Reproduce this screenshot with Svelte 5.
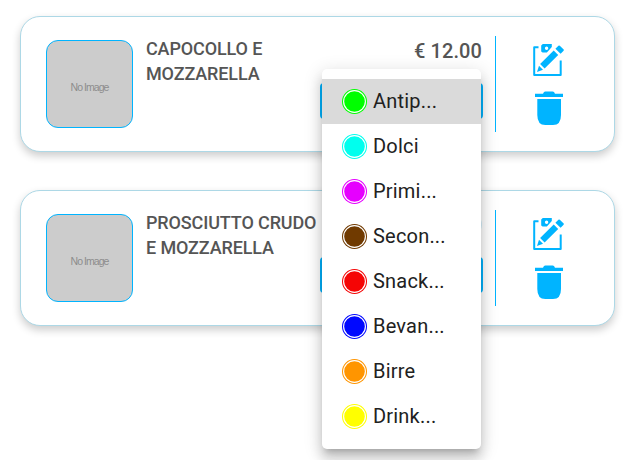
<script>
  const products = [
    { name: 'CAPOCOLLO E MOZZARELLA', price: '€ 12.00' },
    { name: 'PROSCIUTTO CRUDO E MOZZARELLA', price: '€ 12.00' }
  ];
  const categories = [
    { label: 'Antip...', color: '#00ff00' },
    { label: 'Dolci', color: '#00ffee' },
    { label: 'Primi...', color: '#e600ff' },
    { label: 'Secon...', color: '#703a00' },
    { label: 'Snack...', color: '#f50505' },
    { label: 'Bevan...', color: '#0008ff' },
    { label: 'Birre', color: '#ff9500' },
    { label: 'Drink...', color: '#ffff00' }
  ];
  let selected = $state(0);
</script>

<main>
  {#each products as product}
    <article class="card">
      <div class="thumb"><span>No Image</span></div>
      <h2>{product.name}</h2>
      <div class="side">
        <div class="price">{product.price}</div>
        <button class="category" aria-label="Category"></button>
      </div>
      <div class="actions">
        <svg class="edit" width="34" height="34" viewBox="0 0 34 34" aria-label="Edit">
          <path d="M6.5 3.2H2.2V30.9H28.7V16.5" fill="none" stroke="currentColor" stroke-width="2" stroke-linejoin="round" />
          <path d="M9.2 1.6 10.8 0H19.8V2.9L14.9 8.6H10.6L9.2 7.4Z M14.6 2.6A1.7 1.7 0 1 0 14.6 6A1.7 1.7 0 1 0 14.6 2.6Z" fill="currentColor" fill-rule="evenodd" />
          <path d="M21.7 6.4 26.2 10.9 12.6 24.6 8.1 20.1Z M23.4 4.7 26.4 1.7Q27.1 1.2 27.8 1.8L31.7 5.6Q32.1 6.2 31.6 6.8L28.6 9.8Z M7 21.7 11 25.7 5 28Z" fill="currentColor" />
        </svg>
        <svg class="trash" width="28" height="34" viewBox="0 0 28 34" aria-label="Delete">
          <path d="M0 2.7H8Q8.8.4 10.3.4H17.7Q19.2.4 20 2.7H28V6H0Z M2.3 8H26V24Q26 34 18 34H10.3Q2.3 34 2.3 24Z" fill="currentColor" />
        </svg>
      </div>
    </article>
  {/each}

  <ul class="menu">
    {#each categories as category, i}
      <li>
        <button class:selected={selected === i} onclick={() => (selected = i)}>
          <svg width="25" height="25" viewBox="0 0 25 25" style:color={category.color}>
            <circle cx="12.5" cy="12.5" r="12.5" fill="currentColor" />
            <circle cx="12.5" cy="12.5" r="10.9" fill="none" stroke="#fff" stroke-width="1.15" />
          </svg>
          <span>{category.label}</span>
        </button>
      </li>
    {/each}
  </ul>
</main>

<style>
  :global(body) {
    margin: 0;
    background: #fff;
  }
  main {
    position: relative;
    box-sizing: border-box;
    width: 630px;
    height: 460px;
    padding: 16px 15px 0 20px;
    display: flex;
    flex-direction: column;
    gap: 38px;
    overflow: hidden;
    font-family: Roboto, 'Liberation Sans', sans-serif;
  }
  .card {
    box-sizing: border-box;
    height: 136px;
    flex: none;
    display: flex;
    align-items: flex-start;
    padding: 19px 0 0 25px;
    border: 1px solid lightblue;
    border-radius: 20px;
    background: #fff;
    box-shadow: 0 4px 8px rgba(0, 0, 0, 0.2);
  }
  .thumb {
    box-sizing: border-box;
    width: 87px;
    height: 88px;
    margin-top: 4px;
    display: flex;
    align-items: center;
    justify-content: center;
    border: 1px solid #00b4ff;
    border-radius: 12px;
    background: #ccc;
    color: #8c8c8c;
    font: 10.5px 'Liberation Sans', sans-serif;
    letter-spacing: -0.95px;
  }
  .thumb span {
    padding-top: 5px;
  }
  h2 {
    width: 174px;
    margin: 0 0 0 13px;
    color: #555;
    font-size: 18px;
    font-weight: 500;
    line-height: 25px;
    letter-spacing: -0.13px;
  }
  .side {
    width: 163px;
    display: flex;
    flex-direction: column;
  }
  .price {
    height: 47px;
    padding: 3px 1px 0 0;
    box-sizing: border-box;
    color: #555;
    font-size: 20px;
    font-weight: 500;
    line-height: 25px;
    letter-spacing: 0.1px;
    text-align: right;
  }
  .category {
    height: 36px;
    padding: 0;
    border: 0;
    border-radius: 4px;
    background: #00b4ff;
  }
  .actions {
    width: 106px;
    height: 96px;
    box-sizing: border-box;
    margin-left: 12px;
    padding-top: 8px;
    display: flex;
    flex-direction: column;
    align-items: center;
    gap: 13px;
    border-left: 1px solid #00b4ff;
    color: #00b4ff;
  }
  .menu {
    position: absolute;
    left: 322px;
    top: 69px;
    width: 159px;
    margin: 0;
    padding: 10px 0;
    list-style: none;
    border-radius: 5px;
    background: #fff;
    box-shadow:
      0 6px 6px -4px rgba(0, 0, 0, 0.2),
      0 10px 12px 1px rgba(0, 0, 0, 0.14),
      0 4px 18px 2px rgba(0, 0, 0, 0.12);
  }
  .menu button {
    width: 100%;
    height: 45px;
    padding: 0 0 0 20px;
    display: flex;
    align-items: center;
    gap: 6px;
    border: 0;
    background: transparent;
    color: #212121;
    font: 20px Roboto, 'Liberation Sans', sans-serif;
    letter-spacing: 0.2px;
  }
  .menu span {
    padding-bottom: 2px;
  }
  .menu button.selected {
    background: #dadada;
  }
</style>
